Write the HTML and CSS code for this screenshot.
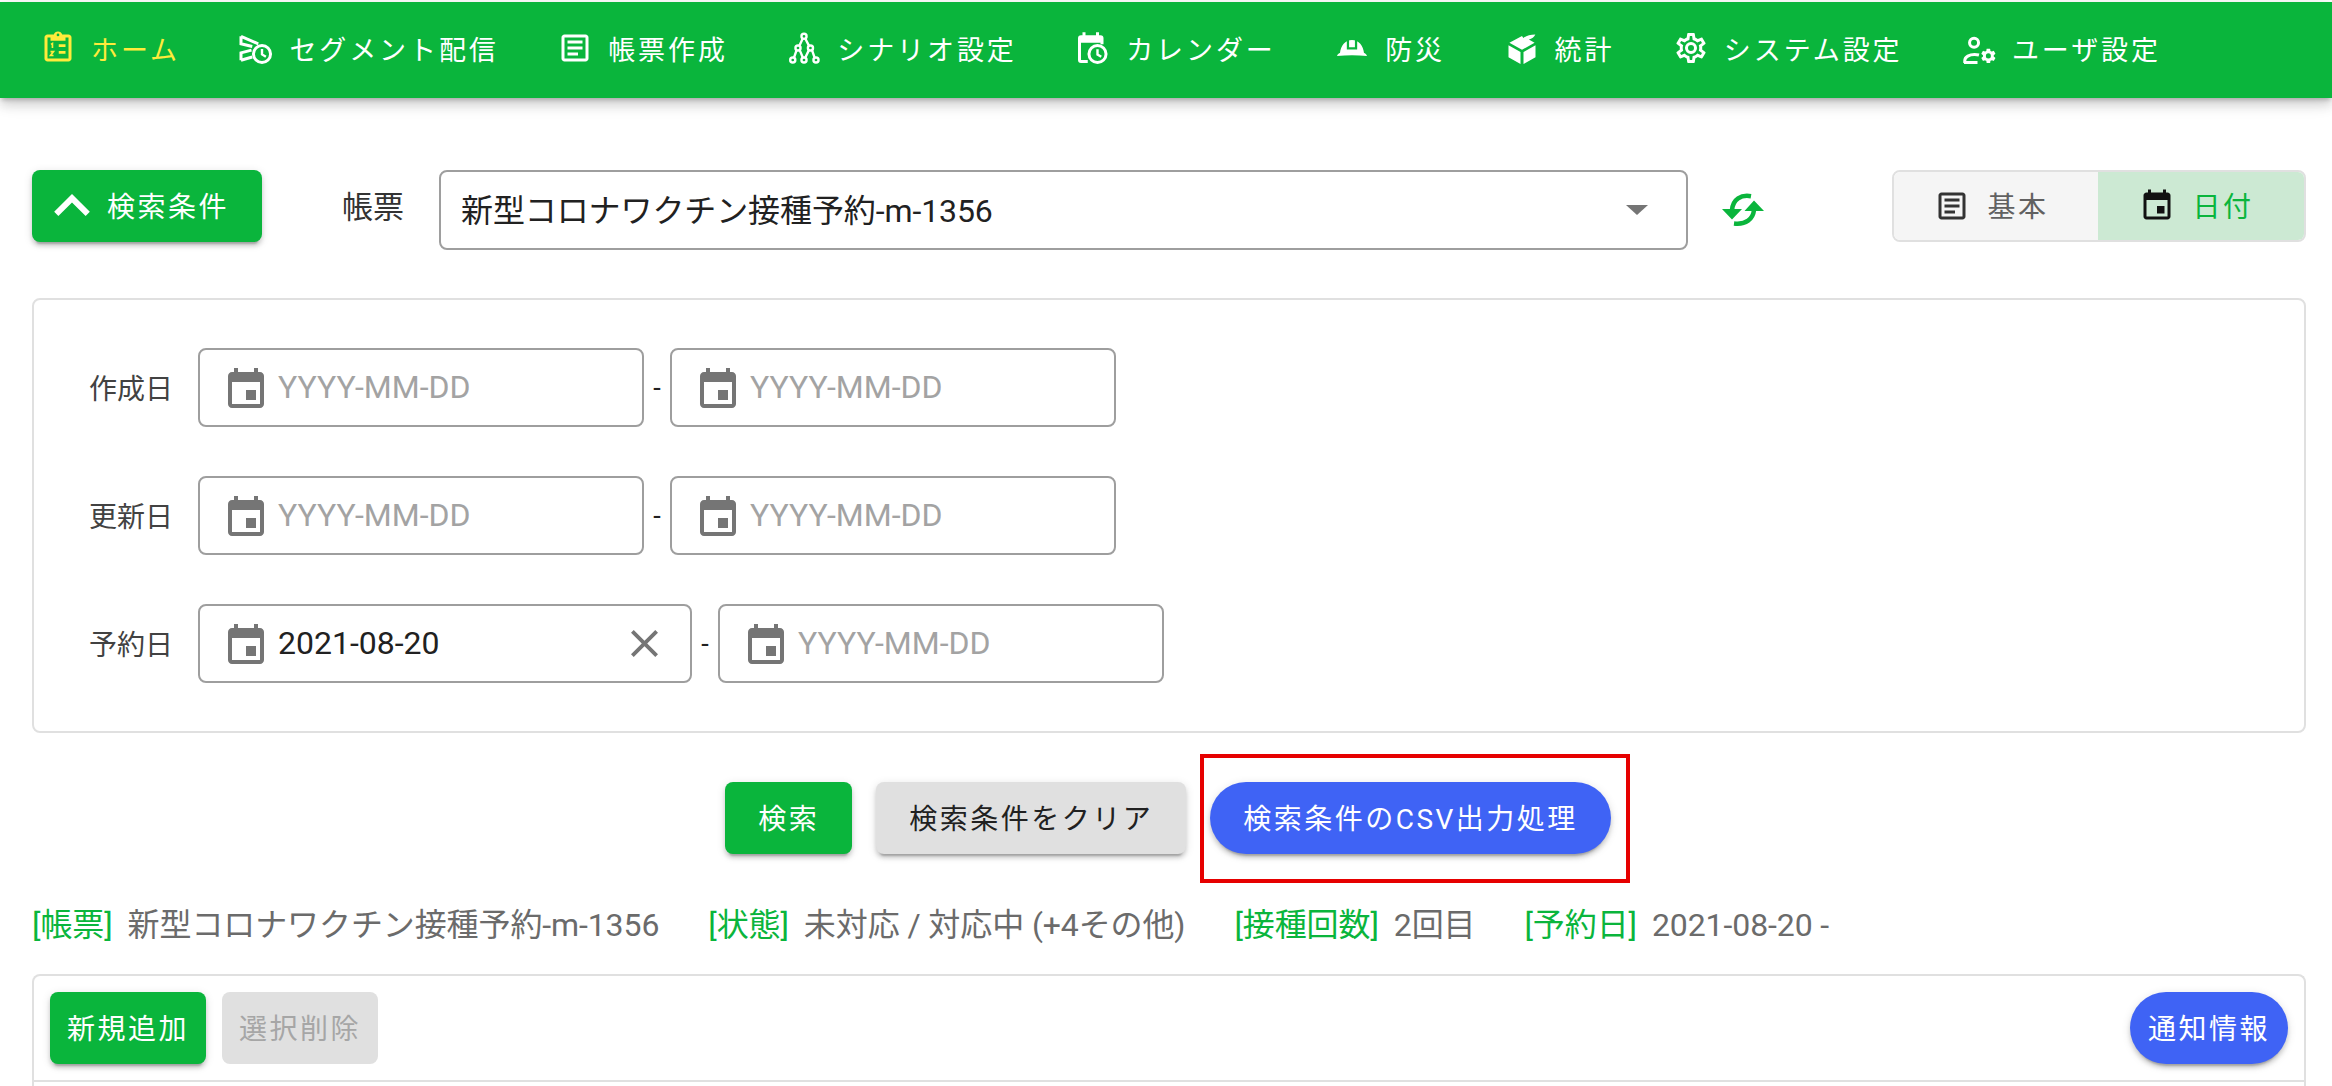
FILE: index.html
```html
<!DOCTYPE html>
<html lang="ja">
<head>
  <meta charset="UTF-8" />
  <title>検索条件</title>
  <link rel="stylesheet" href="styles.css">
</head>
<body>

  <svg class="defs" width="0" height="0">
    <symbol id="i-event" viewBox="0 0 24 24"><path d="M17 12h-5v5h5v-5zM16 1v2H8V1H6v2H5c-1.11 0-1.99.9-1.99 2L3 19c0 1.1.89 2 2 2h14c1.1 0 2-.9 2-2V5c0-1.1-.9-2-2-2h-1V1h-2zm3 18H5V8h14v11z"/></symbol>
    <symbol id="i-doc" viewBox="0 0 24 24"><path d="M5 3c-1.1 0-2 .9-2 2v14c0 1.1.9 2 2 2h14c1.1 0 2-.9 2-2V5c0-1.1-.9-2-2-2H5m0 2h14v14H5V5m2 2v2h10V7H7m0 4v2h10v-2H7m0 4v2h7v-2H7z"/></symbol>
    <symbol id="i-cog" viewBox="0 0 24 24"><path d="M12,15.5A3.5,3.5 0 0,1 8.5,12A3.5,3.5 0 0,1 12,8.5A3.5,3.5 0 0,1 15.5,12A3.5,3.5 0 0,1 12,15.5M19.43,12.97C19.47,12.65 19.5,12.33 19.5,12C19.5,11.67 19.47,11.34 19.43,11L21.54,9.37C21.73,9.22 21.78,8.95 21.66,8.73L19.66,5.27C19.54,5.05 19.27,4.96 19.05,5.05L16.56,6.05C16.04,5.66 15.5,5.32 14.87,5.07L14.5,2.42C14.46,2.18 14.25,2 14,2H10C9.75,2 9.54,2.18 9.5,2.42L9.13,5.07C8.5,5.32 7.96,5.66 7.44,6.05L4.95,5.05C4.73,4.96 4.46,5.05 4.34,5.27L2.34,8.73C2.21,8.95 2.27,9.22 2.46,9.37L4.57,11C4.53,11.34 4.5,11.67 4.5,12C4.5,12.33 4.53,12.65 4.57,12.97L2.46,14.63C2.27,14.78 2.21,15.05 2.34,15.27L4.34,18.73C4.46,18.95 4.73,19.03 4.95,18.95L7.44,17.94C7.96,18.34 8.5,18.68 9.13,18.93L9.5,21.58C9.54,21.82 9.75,22 10,22H14C14.25,22 14.46,21.82 14.5,21.58L14.87,18.93C15.5,18.67 16.04,18.34 16.56,17.94L19.05,18.95C19.27,19.03 19.54,18.95 19.66,18.73L21.66,15.27C21.78,15.05 21.73,14.78 21.54,14.63L19.43,12.97Z"/></symbol>
  </svg>

  <nav class="topnav">
    <a class="nav-item active" href="#home">
      <svg class="icon" viewBox="0 0 24 24">
        <path fill-rule="evenodd" d="M19 3h-4.2C14.4 1.8 13.3 1 12 1s-2.4.8-2.8 2H5c-1.1 0-2 .9-2 2v14c0 1.1.9 2 2 2h14c1.100 0 2-.9 2-2V5c0-1.100-.9-2-2-2zM12 2.400a.9.9 0 1 1 0 1.800.9.9 0 0 1 0-1.800zM19 19H5V5h2v2.200h10V5h2z"/>
        <path d="M12.500 9.500H17v1.800h-4.500zM12.500 14H17v1.800h-4.500z"/>
        <path class="thin" d="M7.300 9.600l1-.6v3M7 14.400h2L7 17h2"/>
      </svg>
      ホーム
    </a>
    <a class="nav-item" href="#segment">
      <svg class="icon" viewBox="0 0 24 24">
        <path class="line" d="M2 4.200l11.500 5M2 4.200v5l7.500 1.800M2 20.200v-5l7 -1.800M2 20.200l7.500-2.200"/>
        <circle class="line" cx="16" cy="16" r="5.700"/>
        <path class="line-s" d="M16 12.600V16.300l2.600 1.600"/>
      </svg>
      セグメント配信
    </a>
    <a class="nav-item" href="#forms">
      <svg class="icon"><use href="#i-doc"/></svg>
      帳票作成
    </a>
    <a class="nav-item" href="#scenario">
      <svg class="icon" viewBox="0 0 24 24">
        <path class="line-s" d="M11 6L9 10.400M13 6l2.300 4.400M7 13.600L5.400 18.300M9.200 13.600L11.200 18.300M15.200 13.600L12.900 18.300M17.400 13.600L19 18.300"/>
        <g class="line-s"><circle cx="12" cy="4.200" r="1.700"/><circle cx="8" cy="12" r="1.700"/><circle cx="16.300" cy="12" r="1.700"/><circle cx="4.500" cy="20" r="1.700"/><circle cx="12" cy="20" r="1.700"/><circle cx="20" cy="20" r="1.700"/></g>
      </svg>
      シナリオ設定
    </a>
    <a class="nav-item" href="#calendar">
      <svg class="icon" viewBox="0 0 24 24">
        <path d="M5 1.500v2H4a2 2 0 0 0-2 2V20a2 2 0 0 0 2 2h4.500v-2H4V8.500h13v1h2V5.500a2 2 0 0 0-2-2h-1v-2h-2v2H7v-2z"/>
        <circle class="line" cx="15" cy="16" r="5.700"/>
        <path class="line-s" d="M15 12.800V16.300l2.500 1.500"/>
      </svg>
      カレンダー
    </a>
    <a class="nav-item" href="#disaster">
      <svg class="icon" viewBox="0 0 24 24">
        <path d="M2 17.300c.4-1.100 1.200-1.700 2-1.900C4.400 10.500 7.500 6.700 12 6.700s7.600 3.800 8 8.700c.8.200 1.600.8 2 1.900-6.600-.6-13.400-.6-20 0z"/>
        <path class="notch" d="M9.300 6.500v5.800h5.400V6.500"/>
      </svg>
      防災
    </a>
    <a class="nav-item" href="#stats">
      <svg class="icon" viewBox="0 0 24 24">
        <path d="M3 10.200l8 4.500v8l-8-4.500zM21 10.200l-8 4.500v8l8-4.500zM3.600 8.500l8.400 4.700 8.400-4.700-3.800-2.100c2-.6 3.500-1.600 4.300-3.400-3.400 0-6 .7-8 2.400L12 4z"/>
      </svg>
      統計
    </a>
    <a class="nav-item" href="#system">
      <svg class="icon" viewBox="0 0 24 24">
        <path d="M12,8A4,4 0 0,1 16,12A4,4 0 0,1 12,16A4,4 0 0,1 8,12A4,4 0 0,1 12,8M12,10A2,2 0 0,0 10,12A2,2 0 0,0 12,14A2,2 0 0,0 14,12A2,2 0 0,0 12,10M10,22C9.75,22 9.54,21.82 9.5,21.58L9.13,18.93C8.5,18.68 7.96,18.34 7.44,17.94L4.95,18.95C4.73,19.03 4.46,18.95 4.34,18.73L2.34,15.27C2.21,15.05 2.27,14.78 2.46,14.63L4.57,12.97L4.5,12L4.57,11L2.46,9.37C2.27,9.22 2.21,8.95 2.34,8.73L4.34,5.27C4.46,5.05 4.73,4.96 4.95,5.05L7.44,6.05C7.96,5.66 8.5,5.32 9.13,5.07L9.5,2.42C9.54,2.18 9.75,2 10,2H14C14.25,2 14.46,2.18 14.5,2.42L14.87,5.07C15.5,5.32 16.04,5.66 16.56,6.05L19.05,5.05C19.27,4.96 19.54,5.05 19.66,5.27L21.66,8.73C21.79,8.95 21.73,9.22 21.54,9.37L19.43,11L19.5,12L19.43,13L21.54,14.63C21.73,14.78 21.79,15.05 21.66,15.27L19.66,18.73C19.54,18.95 19.27,19.04 19.05,18.95L16.56,17.95C16.04,18.34 15.5,18.68 14.87,18.93L14.5,21.58C14.46,21.82 14.25,22 14,22H10M11.25,4L10.88,6.61C9.68,6.86 8.62,7.5 7.85,8.39L5.44,7.35L4.69,8.65L6.8,10.2C6.4,11.37 6.4,12.64 6.8,13.8L4.68,15.36L5.43,16.66L7.86,15.62C8.63,16.5 9.68,17.14 10.87,17.38L11.24,20H12.76L13.13,17.39C14.32,17.14 15.37,16.5 16.14,15.62L18.57,16.66L19.32,15.36L17.2,13.81C17.6,12.64 17.6,11.37 17.2,10.2L19.31,8.65L18.56,7.35L16.15,8.39C15.38,7.5 14.32,6.86 13.12,6.62L12.75,4H11.25Z"/>
      </svg>
      システム設定
    </a>
    <a class="nav-item" href="#user">
      <svg class="icon" viewBox="0 0 24 24">
        <circle class="line" cx="8.700" cy="8.500" r="3"/>
        <path class="line" d="M2.500 22v-1.500c0-2.600 3.200-4.200 6.500-4.200 1 0 2 .1 3 .4M2 21.700h9"/>
        <use href="#i-cog" x="12.500" y="11.500" width="11.500" height="11.500"/>
      </svg>
      ユーザ設定
    </a>
  </nav>

  <main class="page">

    <div class="toolbar">
      <button class="btn btn-green btn-filter">
        <svg class="chevron" viewBox="6 8 12 7.41"><path d="M7.41 15.41L12 10.830l4.590 4.580L18 14l-6-6-6 6z"/></svg>
        検索条件
      </button>
      <span class="form-label">帳票</span>
      <div class="select">
        <span>新型コロナワクチン接種予約-m-1356</span>
        <i class="select-arrow"></i>
      </div>
      <svg class="sync" viewBox="0 0 44 33">
        <path class="sync-arc" d="M30 3.200C20 1.500 12 6 11 17M33 17c-1 9-8 15-20 13.500"/>
        <path class="sync-head" d="M1 16h20L11 26.500zM33 7.500L43 18H23.500z"/>
      </svg>
      <div class="view-toggle">
        <div class="view-item">
          <svg class="icon icon-dark"><use href="#i-doc"/></svg>
          基本
        </div>
        <div class="view-item view-active">
          <svg class="icon icon-black"><use href="#i-event"/></svg>
          日付
        </div>
      </div>
    </div>

    <section class="panel">
      <div class="date-row">
        <label class="date-label">作成日</label>
        <div class="date-input">
          <svg class="icon icon-cal"><use href="#i-event"/></svg>
          <span class="placeholder">YYYY-MM-DD</span>
        </div>
        <span class="dash">-</span>
        <div class="date-input">
          <svg class="icon icon-cal"><use href="#i-event"/></svg>
          <span class="placeholder">YYYY-MM-DD</span>
        </div>
      </div>
      <div class="date-row">
        <label class="date-label">更新日</label>
        <div class="date-input">
          <svg class="icon icon-cal"><use href="#i-event"/></svg>
          <span class="placeholder">YYYY-MM-DD</span>
        </div>
        <span class="dash">-</span>
        <div class="date-input">
          <svg class="icon icon-cal"><use href="#i-event"/></svg>
          <span class="placeholder">YYYY-MM-DD</span>
        </div>
      </div>
      <div class="date-row">
        <label class="date-label">予約日</label>
        <div class="date-input date-filled">
          <svg class="icon icon-cal"><use href="#i-event"/></svg>
          <span class="date-value">2021-08-20</span>
          <svg class="clear" viewBox="5 5 14 14"><path d="M19 6.410L17.590 5 12 10.590 6.410 5 5 6.410 10.590 12 5 17.590 6.410 19 12 13.410 17.590 19 19 17.590 13.410 12z"/></svg>
        </div>
        <span class="dash">-</span>
        <div class="date-input">
          <svg class="icon icon-cal"><use href="#i-event"/></svg>
          <span class="placeholder">YYYY-MM-DD</span>
        </div>
      </div>
    </section>

    <div class="actions">
      <button class="btn btn-green">検索</button>
      <button class="btn btn-grey">検索条件をクリア</button>
      <button class="btn btn-blue btn-csv">検索条件のCSV出力処理</button>
    </div>

    <div class="summary">
      <span class="summary-item"><b>[帳票]</b>新型コロナワクチン接種予約-m-1356</span>
      <span class="summary-item"><b>[状態]</b>未対応 / 対応中 (+4その他)</span>
      <span class="summary-item"><b>[接種回数]</b>2回目</span>
      <span class="summary-item"><b>[予約日]</b>2021-08-20 -</span>
    </div>

    <section class="card">
      <div class="card-head">
        <button class="btn btn-green">新規追加</button>
        <button class="btn btn-disabled">選択削除</button>
        <button class="btn btn-blue btn-notify">通知情報</button>
      </div>
      <div class="card-body"></div>
    </section>

  </main>
</body>
</html>
```

FILE: styles.css
```css
* {
  margin: 0;
  padding: 0;
  box-sizing: border-box;
}

html, body {
  height: 100%;
  overflow: hidden;
}

body {
  font-family: Roboto, "Noto Sans CJK JP", sans-serif;
  background: #fff;
  color: #212121;
}

.defs {
  position: absolute;
}

svg {
  fill: currentColor;
}

.icon {
  width: 36px;
  height: 36px;
  flex: none;
}

/* Top navigation */
.topnav {
  display: flex;
  align-items: center;
  gap: 58.5px;
  height: 96px;
  margin-top: 2px;
  padding: 0 0 4px 40px;
  background: #0ab53c;
  box-shadow: 0 4px 4px -2px rgba(0, 0, 0, .2), 0 8px 10px rgba(0, 0, 0, .12), 0 2px 20px rgba(0, 0, 0, .1);
  position: relative;
}

.nav-item {
  display: flex;
  align-items: center;
  gap: 15px;
  color: #fff;
  font-size: 27px;
  letter-spacing: 2.9px;
  text-decoration: none;
}

.nav-item.active {
  color: #ffeb3b;
}

.line, .line-s, .thin {
  fill: none;
  stroke: currentColor;
}

.line {
  stroke-width: 2;
}

.line-s {
  stroke-width: 1.6;
}

.thin {
  stroke-width: 1.1;
}

.notch {
  fill: none;
  stroke: #0ab53c;
  stroke-width: 1.5;
}

/* Page */
.page {
  padding: 72px 26px 0 32px;
}

.toolbar {
  display: flex;
  align-items: flex-start;
}

.btn {
  height: 72px;
  padding: 0 33px 3px;
  border: none;
  border-radius: 8px;
  font-family: inherit;
  font-size: 28px;
  letter-spacing: 2.5px;
  box-shadow: 0 6px 2px -4px rgba(0, 0, 0, .2), 0 4px 4px rgba(0, 0, 0, .14), 0 2px 10px rgba(0, 0, 0, .12);
}

.btn-green {
  background: #0ab53c;
  color: #fff;
}

.btn-grey {
  background: #e0e0e0;
  color: #212121;
}

.btn-blue {
  background: #3f63f5;
  color: #fff;
  border-radius: 36px;
}

.btn-disabled {
  background: #e0e0e0;
  color: #a6a6a6;
  box-shadow: none;
}

.btn-filter {
  display: flex;
  align-items: center;
  gap: 17px;
  width: 230px;
  padding: 0 22px 3px;
}

.chevron {
  width: 36px;
  height: 22px;
}

.form-label {
  margin-left: 80px;
  width: 97px;
  line-height: 76px;
  font-size: 31px;
  color: #333;
}

.select {
  display: flex;
  align-items: center;
  justify-content: space-between;
  width: 1249px;
  height: 80px;
  padding: 0 38px 5px 20px;
  border: 2px solid #9e9e9e;
  border-radius: 8px;
  font-size: 32px;
  letter-spacing: -.1px;
}

.select-arrow {
  width: 0;
  height: 0;
  margin-top: 5px;
  border-left: 11px solid transparent;
  border-right: 11px solid transparent;
  border-top: 10px solid #757575;
}

.sync {
  width: 44px;
  height: 33px;
  margin: 23px 0 0 33px;
}

.sync-arc {
  fill: none;
  stroke: #0ab53c;
  stroke-width: 4.5;
}

.sync-head {
  fill: #0ab53c;
}

.view-toggle {
  display: flex;
  margin-left: auto;
  width: 414px;
  height: 72px;
  border: 2px solid #e0e0e0;
  border-radius: 8px;
  overflow: hidden;
  font-size: 28px;
  letter-spacing: 2.5px;
}

.view-item {
  flex: none;
  width: 204px;
  display: flex;
  align-items: center;
  justify-content: center;
  gap: 17px;
  padding: 0 9px 3px 0;
  background: #f5f5f5;
  color: #616161;
}

.view-item .icon {
  margin-top: 3px;
}

.view-active {
  flex: 1;
  background: #cce9d3;
  color: #0ab53c;
}

.icon-dark {
  color: #333;
}

.icon-black {
  color: #111;
}

/* Date filters */
.panel {
  margin-top: 48px;
  padding: 48px 55px;
  display: grid;
  gap: 49px;
  border: 2px solid #e0e0e0;
  border-radius: 8px;
}

.date-row {
  display: flex;
  align-items: center;
}

.date-label {
  width: 109px;
  padding-bottom: 2px;
  font-size: 28px;
  color: #424242;
}

.date-input {
  display: flex;
  align-items: center;
  width: 446px;
  height: 79px;
  padding-left: 22px;
  gap: 8px;
  border: 2px solid #9e9e9e;
  border-radius: 8px;
  font-size: 32px;
}

.date-filled {
  width: 494px;
}

.icon-cal {
  width: 48px;
  height: 48px;
  margin-top: 5px;
  color: #757575;
}

.placeholder, .date-value {
  padding-bottom: 2px;
}

.placeholder {
  color: #a3a3a3;
}

.clear {
  width: 27px;
  height: 27px;
  margin-left: auto;
  margin-right: 32px;
  color: #757575;
}

.dash {
  width: 26px;
  text-align: center;
  font-size: 27px;
}

/* Buttons under the filter */
.actions {
  display: flex;
  justify-content: center;
  gap: 24px;
  margin: 49px 2px 0 0;
  position: relative;
}

.btn-csv {
  position: relative;
}

.btn-csv::after {
  content: "";
  position: absolute;
  top: -28px;
  bottom: -29px;
  left: -10px;
  right: -19px;
  border: 4px solid #e60000;
}

/* Current filter summary */
.summary {
  display: flex;
  gap: 49px;
  height: 40px;
  margin-top: 48px;
  align-items: center;
  font-size: 32px;
  letter-spacing: -.1px;
  color: #6b6b6b;
}

.summary b {
  font-weight: 400;
  color: #0ab53c;
  margin-right: 15px;
}

/* Results card */
.card {
  margin-top: 32px;
  border: 2px solid #e0e0e0;
  border-bottom: none;
  border-radius: 8px 8px 0 0;
}

.card-head {
  display: flex;
  gap: 16px;
  padding: 16px;
  border-bottom: 2px solid #e0e0e0;
}

.card-head .btn {
  padding: 0 17px 3px;
}

.card-head .btn-notify {
  margin-left: auto;
  padding: 0 18px 3px;
}

.card-body {
  height: 4px;
}
```
